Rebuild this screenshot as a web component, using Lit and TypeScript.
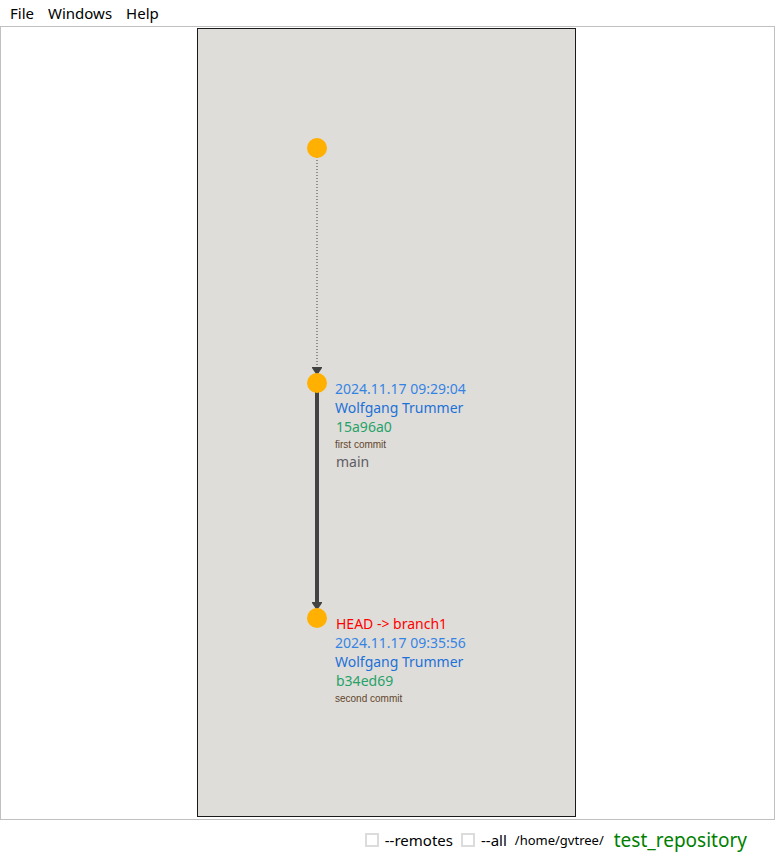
import { LitElement, html, svg, css } from "lit";
import { customElement, property } from "lit/decorators.js";

type Kind = "date" | "author" | "hash" | "summary" | "branch" | "head";

interface Line {
  kind: Kind;
  text: string;
}

interface Commit {
  y: number;
  lines: Line[];
}

const SHEET = { width: 379, height: 789 };
const LANE = 120;
const RADIUS = 10;

const COMMITS: Commit[] = [
  { y: 120, lines: [] },
  {
    y: 355,
    lines: [
      { kind: "date", text: "2024.11.17 09:29:04" },
      { kind: "author", text: "Wolfgang Trummer" },
      { kind: "hash", text: "15a96a0" },
      { kind: "summary", text: "first commit" },
      { kind: "branch", text: "main" },
    ],
  },
  {
    y: 590,
    lines: [
      { kind: "head", text: "HEAD -> branch1" },
      { kind: "date", text: "2024.11.17 09:35:56" },
      { kind: "author", text: "Wolfgang Trummer" },
      { kind: "hash", text: "b34ed69" },
      { kind: "summary", text: "second commit" },
    ],
  },
];

@customElement("commit-graph")
export class CommitGraph extends LitElement {
  @property({ attribute: false }) commits: Commit[] = [];

  static styles = css`
    :host {
      display: block;
      min-height: 0;
    }
    svg {
      display: block;
      width: 100%;
      height: 100%;
    }
    .outline {
      fill: #1a1a1a;
    }
    .sheet {
      fill: #dfddd9;
    }
    .node {
      fill: #ffb000;
    }
    .edge {
      stroke: #424242;
      stroke-width: 4;
    }
    .edge.virtual {
      stroke-width: 1;
      stroke-dasharray: 1 2;
    }
    .arrow {
      fill: #424242;
    }
    text {
      font-family: "Noto Sans", sans-serif;
      font-size: 14px;
    }
    .date {
      fill: #3584e4;
    }
    .author {
      fill: #1c71d8;
    }
    .hash {
      fill: #26a269;
    }
    .branch {
      fill: #5e5c64;
    }
    .head {
      fill: #ff0000;
    }
    .summary {
      font-family: "Liberation Sans", sans-serif;
      font-size: 10px;
      fill: #63452c;
    }
  `;

  private edge(from: Commit, to: Commit) {
    const tip = to.y - RADIUS + 1;
    const kind = from.lines.length ? "edge" : "edge virtual";
    return svg`
      <line class=${kind} x1=${LANE} y1=${from.y + RADIUS - 1} x2=${LANE} y2=${tip - 6}></line>
      <path class="arrow" d="M${LANE - 5} ${tip - 7}H${LANE + 5}V${tip - 6}L${LANE + 1} ${tip}H${LANE - 1}L${LANE - 5} ${tip - 6}Z"></path>`;
  }

  private label(commit: Commit) {
    let y = commit.y - 8;
    return commit.lines.map(({ kind, text }) => {
      y += kind === "summary" ? 16 : 19;
      const x = kind === "hash" || kind === "branch" || kind === "head" ? LANE + 19 : LANE + 18;
      return svg`<text class=${kind} x=${x} y=${y}>${text}</text>`;
    });
  }

  render() {
    const { width, height } = SHEET;
    return html`<svg viewBox="0 0 ${width} ${height}" role="img" aria-label="Commit graph">
      <rect class="outline" width=${width} height=${height}></rect>
      <rect class="sheet" x="1" y="1" width=${width - 2} height=${height - 2}></rect>
      ${this.commits.slice(1).map((c, i) => this.edge(this.commits[i], c))}
      ${this.commits.map((c) => svg`<circle class="node" cx=${LANE} cy=${c.y} r=${RADIUS}></circle>`)}
      ${this.commits.map((c) => this.label(c))}
    </svg>`;
  }
}

@customElement("app-root")
export class AppRoot extends LitElement {
  static styles = css`
    :host {
      display: flex;
      flex-direction: column;
      height: 100vh;
      background: #ffffff;
      color: #000000;
      font: 15px/20px "Noto Sans", sans-serif;
    }
    .menu {
      display: flex;
      gap: 14px;
      padding: 3px 10px;
    }
    .item {
      padding: 0;
      border: 0;
      background: none;
      color: inherit;
      font: inherit;
    }
    .view {
      flex: 1;
      min-height: 0;
      display: flex;
      border: 1px solid #c0c0c0;
      padding: 1px 2px 2px 0;
    }
    .graph {
      flex: 1;
    }
    .status {
      display: flex;
      align-items: center;
      justify-content: flex-end;
      gap: 8px;
      height: 39px;
      padding: 0 28px 0 8px;
    }
    .option {
      display: flex;
      align-items: center;
      gap: 6px;
    }
    .box {
      appearance: none;
      box-sizing: border-box;
      width: 14px;
      height: 14px;
      margin: 0;
      border: 2px solid #dcdcdc;
      background: #ffffff;
    }
    .box:checked {
      background: #808080;
    }
    .path {
      font-size: 13px;
    }
    .repo {
      padding-left: 2px;
      font-size: 19px;
      color: #008000;
    }
  `;

  render() {
    return html`
      <nav class="menu">
        ${["File", "Windows", "Help"].map((name) => html`<button class="item">${name}</button>`)}
      </nav>
      <main class="view">
        <commit-graph class="graph" .commits=${COMMITS}></commit-graph>
      </main>
      <footer class="status">
        ${["--remotes", "--all"].map(
          (name) => html`<label class="option"><input class="box" type="checkbox" />${name}</label>`
        )}
        <span class="path">/home/gvtree/</span>
        <span class="repo">test_repository</span>
      </footer>
    `;
  }
}
